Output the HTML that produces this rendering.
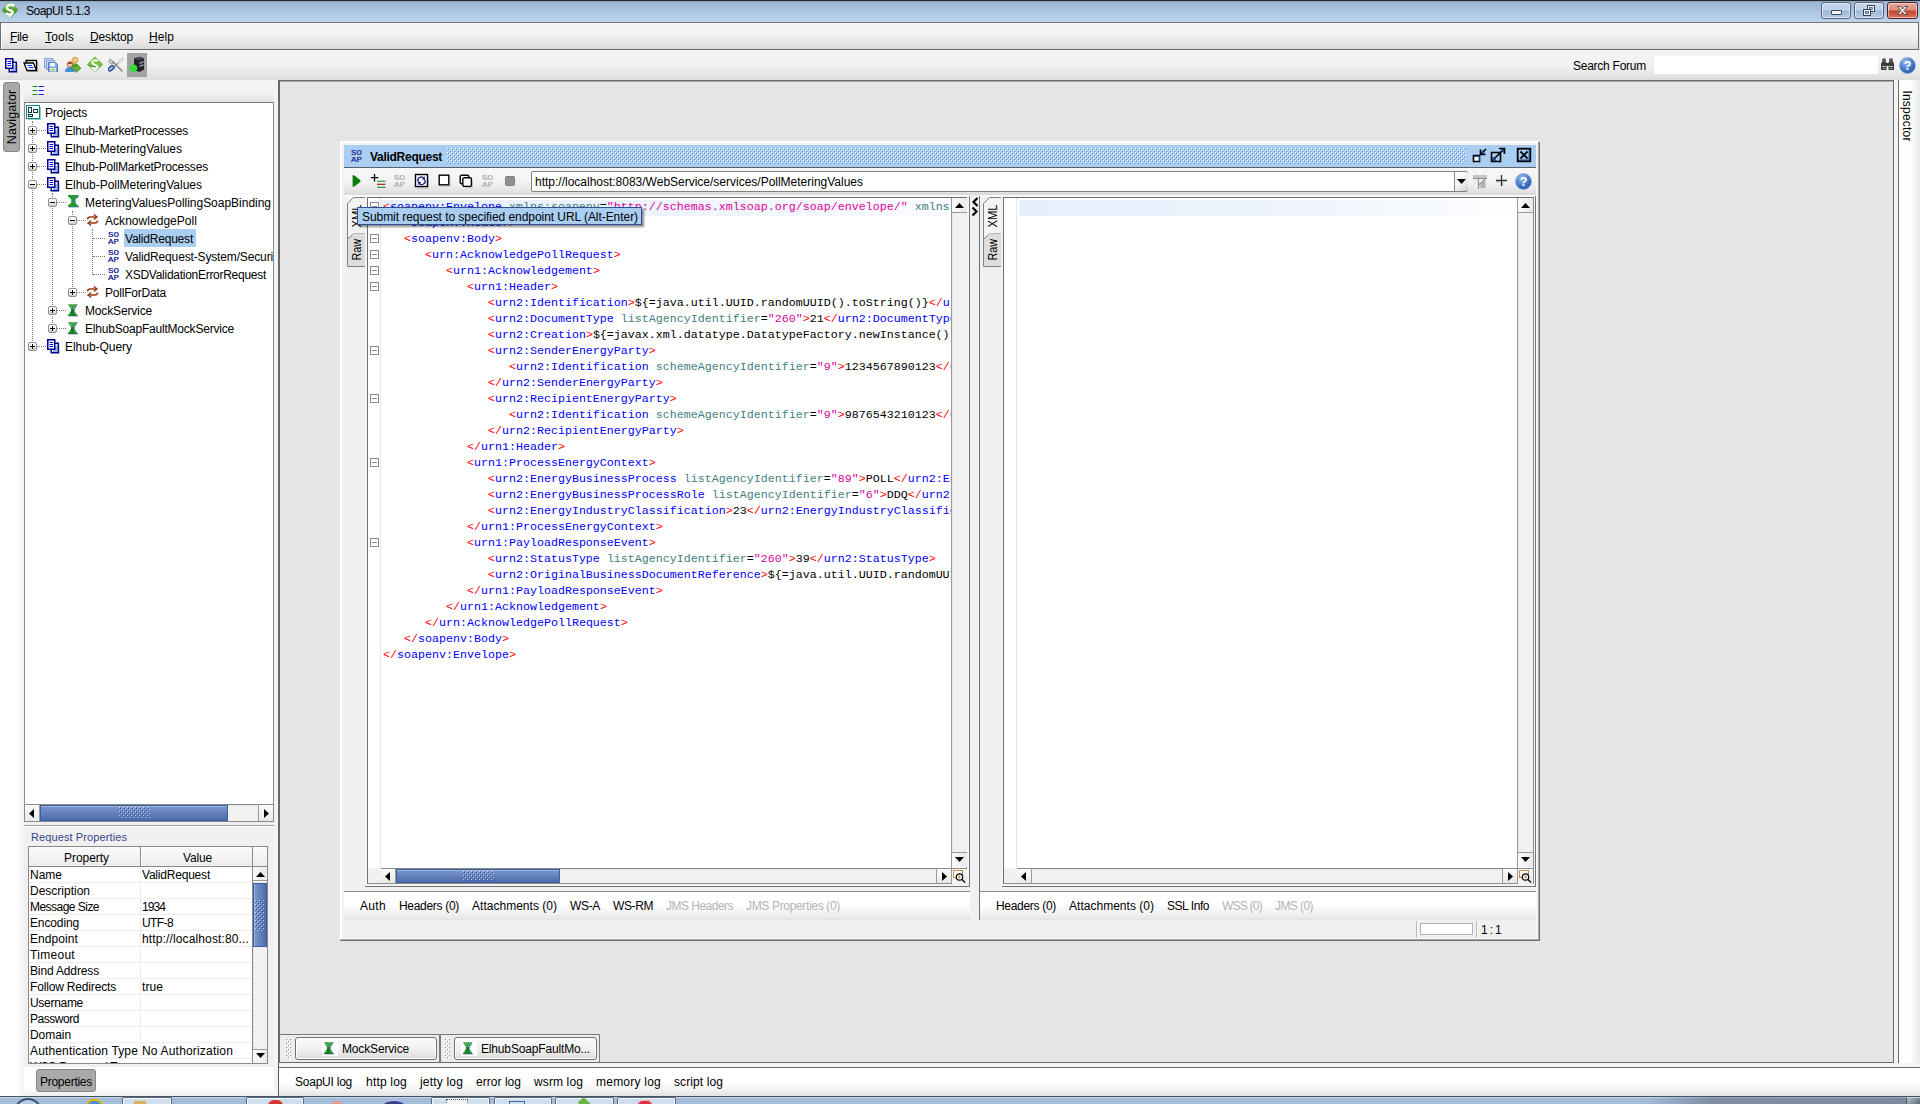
<!DOCTYPE html>
<html><head><meta charset="utf-8"><title>SoapUI 5.1.3</title><style>
html,body{margin:0;padding:0}
body{width:1920px;height:1104px;position:relative;overflow:hidden;background:#f0f0f0;font:12px/14px "Liberation Sans",sans-serif;color:#000}
body div,body svg,.t{position:absolute}
.t{white-space:pre;line-height:14px}
.code{font:11.667px/16px "Liberation Mono",monospace;white-space:pre}
.code .ln{left:0;height:16px;white-space:pre}
i{display:block}
</style></head><body>
<svg width="0" height="0" style="left:0;top:0"><defs><pattern id="gripb" width="4" height="4" patternUnits="userSpaceOnUse"><rect x="0" y="0" width="1" height="1" fill="#c3d0ec"/><rect x="2" y="2" width="1" height="1" fill="#c3d0ec"/><rect x="1" y="1" width="1" height="1" fill="#3d5c9e"/><rect x="3" y="3" width="1" height="1" fill="#3d5c9e"/></pattern><pattern id="gripg" width="4" height="4" patternUnits="userSpaceOnUse"><rect x="0" y="0" width="1" height="1" fill="#fff"/><rect x="2" y="2" width="1" height="1" fill="#fff"/><rect x="1" y="1" width="1" height="1" fill="#8c8c8c"/><rect x="3" y="3" width="1" height="1" fill="#8c8c8c"/></pattern></defs></svg>
<div style="left:0px;top:0px;width:1920px;height:22px;background:linear-gradient(#99b4d1 0,#a3bddb 30%,#b4cce6 70%,#bdd3ea 100%);"></div>
<div style="left:0px;top:0px;width:1920px;height:1px;background:#23282e"></div>
<div style="left:0px;top:1px;width:1920px;height:1px;background:#8fa6c0"></div>
<svg style="left:1px;top:1px;" width="18" height="18" viewBox="0 0 18 18"><defs><linearGradient id="dg" x1="0" y1="0" x2="0" y2="1"><stop offset="0" stop-color="#8fcf5a"/><stop offset=".55" stop-color="#4f9a28"/><stop offset="1" stop-color="#3d8a1e"/></linearGradient></defs><path d="M9 1Q9.800 1 10.500 1.700L16.500 8Q17.200 9 16.500 10L10.500 16.300Q9 17.600 7.500 16.300L1.500 10Q0.800 9 1.500 8L7.500 1.700Q8.200 1 9 1z" fill="url(#dg)"/><path d="M9 12.500l4.500-2.500-3.500 6.300Q9 17.300 8 16.300L5 13z" fill="#f4f8f0"/><path d="M12.500 4.500C10 3 5.800 4 5.800 6.800c0 3 6 2 6 4.600 0 2-3.500 2.700-6.300 1.200" fill="none" stroke="#fff" stroke-width="2.300" stroke-linecap="round"/></svg>
<span class="t" style="left:26px;top:4px;letter-spacing:-0.504px;">SoapUI 5.1.3</span>
<div style="left:1821px;top:2px;width:28px;height:15px;background:linear-gradient(#c3d6ec 0,#bdd1e8 48%,#9db8d6 52%,#b3cbe5 100%);border:1px solid #56657d;border-radius:3px;box-shadow:inset 0 0 0 1px rgba(255,255,255,.55);"></div>
<div style="left:1854px;top:2px;width:28px;height:15px;background:linear-gradient(#c3d6ec 0,#bdd1e8 48%,#9db8d6 52%,#b3cbe5 100%);border:1px solid #56657d;border-radius:3px;box-shadow:inset 0 0 0 1px rgba(255,255,255,.55);"></div>
<div style="left:1887px;top:2px;width:29px;height:15px;background:linear-gradient(#e8a99b 0,#dc8b7a 48%,#c6442a 52%,#d9735a 100%);border:1px solid #5a1a22;border-radius:3px;box-shadow:inset 0 0 0 1px rgba(255,255,255,.55);"></div>
<div style="left:1831px;top:10px;width:9px;height:3px;background:#f4f4f4;border:1px solid #3b4458;border-radius:1px;"></div>
<svg style="left:1862px;top:4px;" width="14" height="13" viewBox="0 0 14 13"><rect x="5.5" y="1.5" width="7" height="6" fill="#f4f4f4" stroke="#3b4458"/><rect x="7.5" y="3.5" width="3" height="2" fill="#9db8d6" stroke="#3b4458" stroke-width=".6"/><rect x="1.5" y="5.5" width="7" height="6" fill="#f4f4f4" stroke="#3b4458"/><rect x="3.5" y="7.5" width="3" height="2" fill="#9db8d6" stroke="#3b4458" stroke-width=".6"/></svg>
<svg style="left:1896px;top:5px;" width="13" height="11" viewBox="0 0 13 11"><path d="M1.5 1.5h3l2 2.6 2-2.6h3L8 5.5l3.5 4h-3l-2-2.6-2 2.6h-3L5 5.5z" fill="#f6f6f6" stroke="#4a4a55" stroke-width=".9"/></svg>
<div style="left:0px;top:22px;width:1919px;height:28px;box-sizing:border-box;border:1px solid #6c6c6c;border-top-color:#767676;background:linear-gradient(#f6f6f6 0,#f2f2f2 45%,#e6e6e6 75%,#dadada 100%);"></div>
<div style="left:1px;top:23px;width:1px;height:26px;background:#fff"></div>
<div style="left:1919px;top:22px;width:1px;height:28px;background:#dfe6ee"></div>
<span class="t" style="left:10px;top:30px;letter-spacing:-0.334px;"><u>F</u>ile</span>
<span class="t" style="left:45px;top:30px;letter-spacing:0.198px;"><u>T</u>ools</span>
<span class="t" style="left:90px;top:30px;letter-spacing:-0.146px;"><u>D</u>esktop</span>
<span class="t" style="left:149px;top:30px;letter-spacing:0.080px;"><u>H</u>elp</span>
<div style="left:0px;top:50px;width:1920px;height:30px;background:linear-gradient(#f4f4f4 0,#f1f1f1 50%,#e4e4e4 85%,#dcdcdc 100%);"></div>
<svg style="left:5px;top:58px;" width="13" height="15" viewBox="0 0 13 15"><rect x="4.250" y="4.250" width="7" height="9.500" fill="#fff" stroke="#00008b" stroke-width="1.500"/><path d="M8.200 8h2M8.200 10h2M6 12h4.200" stroke="#2a6cff" stroke-width="1"/><path d="M12.300 6v9H6" stroke="#8a8a8a" stroke-width="0.800" fill="none" opacity=".6"/><rect x="0.750" y="0.750" width="7" height="9.500" fill="#fff" stroke="#00008b" stroke-width="1.500"/><path d="M2.500 3.500h3.600M2.500 5.500h3.600M2.500 7.500h3.600" stroke="#0000ff" stroke-width="1"/></svg>
<svg style="left:23px;top:58px;" width="16" height="14" viewBox="0 0 16 14"><path d="M3 2.500H13.500V12.500H5z" fill="#fff" stroke="#000" stroke-width="1.300"/><path d="M1 5H10.500L13.500 12.500H4z" fill="#fff" stroke="#000" stroke-width="1.300"/><path d="M14.700 4v9.700H6" stroke="#888" stroke-width="1" fill="none" opacity=".7"/><path d="M4.500 7.500h4.500M5.500 9.500h5" stroke="#1a3cff" stroke-width="1.100"/></svg>
<svg style="left:43px;top:57px;" width="16" height="16" viewBox="0 0 16 16"><rect x="1.5" y="1.5" width="8" height="9" fill="#c9dcf4" stroke="#7fa1d6"/><rect x="3.5" y="3.5" width="8" height="9" fill="#c9dcf4" stroke="#7fa1d6"/><path d="M5.5 5.5h7l2 2v7h-9z" fill="#7ea6e0" stroke="#4f7fc8"/><rect x="7" y="6" width="5" height="3.4" fill="#fff"/><rect x="7" y="11" width="6" height="3.5" fill="#e8f0d8"/><rect x="8" y="12" width="4" height="1.3" fill="#8cc63f"/></svg>
<svg style="left:64px;top:56px;" width="18" height="17" viewBox="0 0 18 17"><circle cx="11" cy="4.2" r="3" fill="#f4c27a" stroke="#d8962c" stroke-width=".8"/><path d="M6.5 13c0-4 2-5.5 4.5-5.5s4.5 1.500 4.500 5.500z" fill="#5aa83a"/><circle cx="6" cy="8.600" r="2.800" fill="#f0c8a0" stroke="#a0522d" stroke-width=".8"/><path d="M5.8 5.8a2.800 2.800 0 0 1 3 2.200l-5.600 0a2.800 2.800 0 0 1 2.600-2.200z" fill="#a0522d"/><path d="M1 16c0-3.500 2-5 5-5s5 1.500 5 5z" fill="#4a90e2"/><path d="M8 10.500h4V8l5 4.200-5 4.200v-2.500H8z" fill="#6ab43e" stroke="#3d8a1e" stroke-width=".8"/></svg>
<svg style="left:86px;top:56px;" width="18" height="17" viewBox="0 0 18 17"><path d="M9 0.800L17 8.500 9 16.200 1 8.500z" fill="#5aa02c"/><path d="M9 0.800L17 8.500 9 10 1 8.500z" fill="#7cc242"/><path d="M9 12l5-2.500L9 16.200 4 10.500z" fill="#eef4ea"/><path d="M12 4.800C9.800 3.600 6.300 4.400 6.300 6.700c0 2.500 5.200 1.800 5.200 4 0 1.800-3.200 2.300-5.400 1.100" fill="none" stroke="#fff" stroke-width="1.900"/></svg>
<svg style="left:108px;top:57px;" width="17" height="16" viewBox="0 0 17 16"><path d="M10 6L14.500 1.500" stroke="#bbb" stroke-width="2.200" stroke-linecap="round"/><path d="M10 6L14.500 1.500" stroke="#fff" stroke-width="1" stroke-linecap="round"/><path d="M8 8l6 6" stroke="#8a8a8a" stroke-width="1.600" stroke-linecap="round"/><path d="M9.500 6.500L4 12" stroke="#8a8a8a" stroke-width="1.500"/><path d="M2.500 2a2.600 2.600 0 1 0 3.600 3.200L4.500 4.800 3.200 3.200z" fill="#ddd" stroke="#8a8a8a" stroke-width=".9"/><path d="M8 8L4 4" stroke="#8a8a8a" stroke-width="1.600"/><rect x="0" y="9.300" width="6.500" height="3.600" rx="1.800" transform="rotate(-40 3.500 11.500)" fill="#9cb4dc" stroke="#1c3f94" stroke-width="1.200"/></svg>
<div style="left:127px;top:53px;width:20px;height:24px;background:#a3a3a3"></div>
<svg style="left:129px;top:56px;" width="16" height="17" viewBox="0 0 16 17"><path d="M5 2.200L11 0.800l4 1.600v11L10.500 16 5 14z" fill="#23232b"/><path d="M5 2.200L11 0.800l4 1.600L10 4z" fill="#4a4a5c"/><path d="M10.500 6.500l4-1.400v1.600l-4 1.400zM10.500 9.500l4-1.400v1.600l-4 1.400z" fill="#9a9ab0"/><circle cx="4.500" cy="12.200" r="3.700" fill="#2fe02f"/></svg>
<span class="t" style="left:1573px;top:59px;letter-spacing:-0.252px;">Search Forum</span>
<div style="left:1654px;top:56px;width:224px;height:18px;background:#fff"></div>
<svg style="left:1880px;top:57px;" width="15" height="15" viewBox="0 0 15 15"><path d="M1 7.500c0-2 1-3 2.500-3h1.500c1 0 1.500.8 1.500 1.500h2c0-.7.500-1.500 1.500-1.500H11.500c1.500 0 2.500 1 2.500 3V13H8.500V9h-2v4H1z" fill="#3d3d3d"/><rect x="2.200" y="1.500" width="3.600" height="3.500" fill="#555"/><rect x="9.200" y="1.500" width="3.600" height="3.500" fill="#555"/><path d="M2 9.500h4M9 9.500h4" stroke="#b9b9b9" stroke-width="1.200"/><path d="M2.500 11.500h3M9.500 11.500h3" stroke="#888" stroke-width="1"/></svg>
<svg style="left:1899px;top:57px;" width="17" height="17" viewBox="0 0 17 17"><defs><radialGradient id="hg1899" cx=".4" cy=".3" r=".8"><stop offset="0" stop-color="#9fc0ee"/><stop offset=".6" stop-color="#3f73c4"/><stop offset="1" stop-color="#1f4ea0"/></radialGradient></defs><circle cx="8.500" cy="8.500" r="8" fill="url(#hg1899)" stroke="#8fb0e0" stroke-width=".8"/><text x="8.600" y="13" text-anchor="middle" font-family="Liberation Sans,sans-serif" font-weight="bold" font-size="12.500" fill="#fff">?</text></svg>
<div style="left:0px;top:80px;width:25px;height:1016px;background:linear-gradient(90deg,#fff 0,#fff 60%,#f0f0f0 100%);"></div>
<div style="left:3px;top:82px;width:15px;height:68px;background:#a9a9a9;border:1px solid #868686;border-radius:3px;"></div>
<span class="t" style="left:3px;top:82px;width:18px;height:69px;"><span style="position:absolute;left:9px;top:34.5px;transform:translate(-50%,-50%) rotate(-90deg);letter-spacing:0.1px;white-space:nowrap;font-size:12.5px">Navigator</span></span>
<div style="left:24px;top:80px;width:251px;height:22px;background:linear-gradient(#f6f6f6 0,#f2f2f2 55%,#e2e2e2 100%);"></div>
<svg style="left:32px;top:85px;" width="13" height="11" viewBox="0 0 13 11"><path d="M0.5 1.500h5M0.5 5.500h5M0.5 9.500h5" stroke="#0a8a0a" stroke-width="1.200"/><path d="M6.800 1.500h5M6.800 5.500h5M6.800 9.500h5" stroke="#1414ff" stroke-width="1.200"/></svg>
<div style="left:24px;top:102px;width:250px;height:720px;box-sizing:border-box;background:#fff;border:1px solid #8a8a8a;border-top-color:#7a7a7a;"></div>
<div style="left:32px;top:121px;width:0px;height:226px;border-left:1px dotted #7c7c7c;"></div>
<div style="left:52px;top:193px;width:0px;height:136px;border-left:1px dotted #7c7c7c;"></div>
<div style="left:72px;top:211px;width:0px;height:82px;border-left:1px dotted #7c7c7c;"></div>
<div style="left:92px;top:229px;width:0px;height:46px;border-left:1px dotted #7c7c7c;"></div>
<div style="left:25px;top:103px;width:248px;height:702px;overflow:hidden">
<svg style="left:1px;top:2px;shape-rendering:crispEdges;" width="15" height="15" viewBox="0 0 15 15"><rect x="0.500" y="0.500" width="13" height="13" fill="#fff" stroke="#0a8a8a" stroke-width="1"/><path d="M14.500 1.500v13h-13" fill="none" stroke="#9ccaca" stroke-width="1"/><rect x="2.500" y="2.500" width="3" height="5" fill="#fff" stroke="#0c3838" stroke-width="1"/><rect x="7.500" y="4.500" width="4" height="3" fill="#fff" stroke="#0c3838" stroke-width="1"/><rect x="2.500" y="9.500" width="4" height="2" fill="#fff" stroke="#0c3838" stroke-width="1"/></svg>
<span class="t" style="left:20px;top:3px;letter-spacing:-0.169px;">Projects</span>
<div style="left:12px;top:27px;width:9px;height:0px;border-top:1px dotted #7c7c7c;"></div>
<div style="left:3px;top:23px;width:7px;height:7px;border:1px solid #8f8f8f;border-radius:2px;background:linear-gradient(#fff 0,#f4f2ee 50%,#cfc8ba 100%);"><i style="position:absolute;left:1px;top:3px;width:5px;height:1px;background:#000"></i><i style="position:absolute;left:3px;top:1px;width:1px;height:5px;background:#000"></i></div>
<svg style="left:22px;top:20px;" width="13" height="15" viewBox="0 0 13 15"><rect x="4.250" y="4.250" width="7" height="9.500" fill="#fff" stroke="#00008b" stroke-width="1.500"/><path d="M8.200 8h2M8.200 10h2M6 12h4.200" stroke="#2a6cff" stroke-width="1"/><path d="M12.300 6v9H6" stroke="#8a8a8a" stroke-width="0.800" fill="none" opacity=".6"/><rect x="0.750" y="0.750" width="7" height="9.500" fill="#fff" stroke="#00008b" stroke-width="1.500"/><path d="M2.500 3.500h3.600M2.500 5.500h3.600M2.500 7.500h3.600" stroke="#0000ff" stroke-width="1"/></svg>
<span class="t" style="left:40px;top:21px;letter-spacing:-0.209px;">Elhub-MarketProcesses</span>
<div style="left:12px;top:45px;width:9px;height:0px;border-top:1px dotted #7c7c7c;"></div>
<div style="left:3px;top:41px;width:7px;height:7px;border:1px solid #8f8f8f;border-radius:2px;background:linear-gradient(#fff 0,#f4f2ee 50%,#cfc8ba 100%);"><i style="position:absolute;left:1px;top:3px;width:5px;height:1px;background:#000"></i><i style="position:absolute;left:3px;top:1px;width:1px;height:5px;background:#000"></i></div>
<svg style="left:22px;top:38px;" width="13" height="15" viewBox="0 0 13 15"><rect x="4.250" y="4.250" width="7" height="9.500" fill="#fff" stroke="#00008b" stroke-width="1.500"/><path d="M8.200 8h2M8.200 10h2M6 12h4.200" stroke="#2a6cff" stroke-width="1"/><path d="M12.300 6v9H6" stroke="#8a8a8a" stroke-width="0.800" fill="none" opacity=".6"/><rect x="0.750" y="0.750" width="7" height="9.500" fill="#fff" stroke="#00008b" stroke-width="1.500"/><path d="M2.500 3.500h3.600M2.500 5.500h3.600M2.500 7.500h3.600" stroke="#0000ff" stroke-width="1"/></svg>
<span class="t" style="left:40px;top:39px;letter-spacing:-0.009px;">Elhub-MeteringValues</span>
<div style="left:12px;top:63px;width:9px;height:0px;border-top:1px dotted #7c7c7c;"></div>
<div style="left:3px;top:59px;width:7px;height:7px;border:1px solid #8f8f8f;border-radius:2px;background:linear-gradient(#fff 0,#f4f2ee 50%,#cfc8ba 100%);"><i style="position:absolute;left:1px;top:3px;width:5px;height:1px;background:#000"></i><i style="position:absolute;left:3px;top:1px;width:1px;height:5px;background:#000"></i></div>
<svg style="left:22px;top:56px;" width="13" height="15" viewBox="0 0 13 15"><rect x="4.250" y="4.250" width="7" height="9.500" fill="#fff" stroke="#00008b" stroke-width="1.500"/><path d="M8.200 8h2M8.200 10h2M6 12h4.200" stroke="#2a6cff" stroke-width="1"/><path d="M12.300 6v9H6" stroke="#8a8a8a" stroke-width="0.800" fill="none" opacity=".6"/><rect x="0.750" y="0.750" width="7" height="9.500" fill="#fff" stroke="#00008b" stroke-width="1.500"/><path d="M2.500 3.500h3.600M2.500 5.500h3.600M2.500 7.500h3.600" stroke="#0000ff" stroke-width="1"/></svg>
<span class="t" style="left:40px;top:57px;letter-spacing:-0.176px;">Elhub-PollMarketProcesses</span>
<div style="left:12px;top:81px;width:9px;height:0px;border-top:1px dotted #7c7c7c;"></div>
<div style="left:3px;top:77px;width:7px;height:7px;border:1px solid #8f8f8f;border-radius:2px;background:linear-gradient(#fff 0,#f4f2ee 50%,#cfc8ba 100%);"><i style="position:absolute;left:1px;top:3px;width:5px;height:1px;background:#000"></i></div>
<svg style="left:22px;top:74px;" width="13" height="15" viewBox="0 0 13 15"><rect x="4.250" y="4.250" width="7" height="9.500" fill="#fff" stroke="#00008b" stroke-width="1.500"/><path d="M8.200 8h2M8.200 10h2M6 12h4.200" stroke="#2a6cff" stroke-width="1"/><path d="M12.300 6v9H6" stroke="#8a8a8a" stroke-width="0.800" fill="none" opacity=".6"/><rect x="0.750" y="0.750" width="7" height="9.500" fill="#fff" stroke="#00008b" stroke-width="1.500"/><path d="M2.500 3.500h3.600M2.500 5.500h3.600M2.500 7.500h3.600" stroke="#0000ff" stroke-width="1"/></svg>
<span class="t" style="left:40px;top:75px;letter-spacing:-0.008px;">Elhub-PollMeteringValues</span>
<div style="left:32px;top:99px;width:9px;height:0px;border-top:1px dotted #7c7c7c;"></div>
<div style="left:23px;top:95px;width:7px;height:7px;border:1px solid #8f8f8f;border-radius:2px;background:linear-gradient(#fff 0,#f4f2ee 50%,#cfc8ba 100%);"><i style="position:absolute;left:1px;top:3px;width:5px;height:1px;background:#000"></i></div>
<svg style="left:42px;top:92px;" width="13" height="13" viewBox="0 0 13 13"><path d="M1 0h10v1.500L7.800 4v4L11 10.500V12H1V10.500L4.200 8V4L1 1.500z" fill="#8c8cf0" transform="translate(1 .6)"/><path d="M1 0h10v1.500L7.800 4v4L11 10.500V12H1V10.500L4.200 8V4L1 1.500z" fill="#1f9a2f"/></svg>
<span class="t" style="left:60px;top:93px;letter-spacing:-0.018px;">MeteringValuesPollingSoapBinding</span>
<div style="left:52px;top:117px;width:9px;height:0px;border-top:1px dotted #7c7c7c;"></div>
<div style="left:43px;top:113px;width:7px;height:7px;border:1px solid #8f8f8f;border-radius:2px;background:linear-gradient(#fff 0,#f4f2ee 50%,#cfc8ba 100%);"><i style="position:absolute;left:1px;top:3px;width:5px;height:1px;background:#000"></i></div>
<svg style="left:61px;top:111px;" width="13" height="13" viewBox="0 0 13 13"><path d="M1.500 5.500C1.500 3.800 2.800 3 4.500 3H10" fill="none" stroke="#9a3a14" stroke-width="1.450"/><path d="M7.800 0.500L11 3 7.800 5.500" fill="none" stroke="#9a3a14" stroke-width="1.450"/><path d="M11.500 6.500C11.500 8.200 10.200 9 8.500 9H3" fill="none" stroke="#9a3a14" stroke-width="1.450"/><path d="M5.200 6.500L2 9l3.200 2.500" fill="none" stroke="#9a3a14" stroke-width="1.450"/></svg>
<span class="t" style="left:80px;top:111px;letter-spacing:0.041px;">AcknowledgePoll</span>
<div style="left:68px;top:135px;width:12px;height:0px;border-top:1px dotted #7c7c7c;"></div>
<svg style="left:83px;top:128px;" width="12" height="14" viewBox="0 0 12 14"><text x="0" y="6.200" font-family="Liberation Mono,monospace" font-size="7.800" fill="#00008b" stroke="#00008b" stroke-width=".15" textLength="11" lengthAdjust="spacingAndGlyphs">SO</text><text x="0" y="13.100" font-family="Liberation Mono,monospace" font-size="7.800" fill="#00008b" stroke="#00008b" stroke-width=".15" textLength="11" lengthAdjust="spacingAndGlyphs">AP</text></svg>
<div style="left:99px;top:126px;width:72px;height:18px;background:#a9cef2;"></div>
<span class="t" style="left:100px;top:129px;letter-spacing:-0.207px;">ValidRequest</span>
<div style="left:68px;top:153px;width:12px;height:0px;border-top:1px dotted #7c7c7c;"></div>
<svg style="left:83px;top:146px;" width="12" height="14" viewBox="0 0 12 14"><text x="0" y="6.200" font-family="Liberation Mono,monospace" font-size="7.800" fill="#00008b" stroke="#00008b" stroke-width=".15" textLength="11" lengthAdjust="spacingAndGlyphs">SO</text><text x="0" y="13.100" font-family="Liberation Mono,monospace" font-size="7.800" fill="#00008b" stroke="#00008b" stroke-width=".15" textLength="11" lengthAdjust="spacingAndGlyphs">AP</text></svg>
<span class="t" style="left:100px;top:147px;letter-spacing:-0.148px;">ValidRequest-System/Securi</span>
<div style="left:68px;top:171px;width:12px;height:0px;border-top:1px dotted #7c7c7c;"></div>
<svg style="left:83px;top:164px;" width="12" height="14" viewBox="0 0 12 14"><text x="0" y="6.200" font-family="Liberation Mono,monospace" font-size="7.800" fill="#00008b" stroke="#00008b" stroke-width=".15" textLength="11" lengthAdjust="spacingAndGlyphs">SO</text><text x="0" y="13.100" font-family="Liberation Mono,monospace" font-size="7.800" fill="#00008b" stroke="#00008b" stroke-width=".15" textLength="11" lengthAdjust="spacingAndGlyphs">AP</text></svg>
<span class="t" style="left:100px;top:165px;letter-spacing:-0.274px;">XSDValidationErrorRequest</span>
<div style="left:52px;top:189px;width:9px;height:0px;border-top:1px dotted #7c7c7c;"></div>
<div style="left:43px;top:185px;width:7px;height:7px;border:1px solid #8f8f8f;border-radius:2px;background:linear-gradient(#fff 0,#f4f2ee 50%,#cfc8ba 100%);"><i style="position:absolute;left:1px;top:3px;width:5px;height:1px;background:#000"></i><i style="position:absolute;left:3px;top:1px;width:1px;height:5px;background:#000"></i></div>
<svg style="left:61px;top:183px;" width="13" height="13" viewBox="0 0 13 13"><path d="M1.500 5.500C1.500 3.800 2.800 3 4.500 3H10" fill="none" stroke="#9a3a14" stroke-width="1.450"/><path d="M7.800 0.500L11 3 7.800 5.500" fill="none" stroke="#9a3a14" stroke-width="1.450"/><path d="M11.500 6.500C11.500 8.200 10.200 9 8.500 9H3" fill="none" stroke="#9a3a14" stroke-width="1.450"/><path d="M5.200 6.500L2 9l3.200 2.500" fill="none" stroke="#9a3a14" stroke-width="1.450"/></svg>
<span class="t" style="left:80px;top:183px;letter-spacing:-0.214px;">PollForData</span>
<div style="left:32px;top:207px;width:9px;height:0px;border-top:1px dotted #7c7c7c;"></div>
<div style="left:23px;top:203px;width:7px;height:7px;border:1px solid #8f8f8f;border-radius:2px;background:linear-gradient(#fff 0,#f4f2ee 50%,#cfc8ba 100%);"><i style="position:absolute;left:1px;top:3px;width:5px;height:1px;background:#000"></i><i style="position:absolute;left:3px;top:1px;width:1px;height:5px;background:#000"></i></div>
<svg style="left:42px;top:201px;" width="12" height="13" viewBox="0 0 12 13"><path d="M1 0h9L7 5v2l3.500 5H0.500L4 7V5z" fill="#8c8cf0" transform="translate(.9 .6)"/><path d="M1 0h9L7 5.200H4z" fill="#6cc06c"/><path d="M1.500 0.500l3 4M4 0.500l2 3.500M7 .5L5 4.500M9.500 .5l-3 4" stroke="#0f7a1f" stroke-width=".7"/><path d="M4 5h3v2l3.500 5H0.500L4 7z" fill="#14801f"/><path d="M2 11l2-2M9 11L7 9" stroke="#6cc06c" stroke-width=".7"/></svg>
<span class="t" style="left:60px;top:201px;letter-spacing:-0.153px;">MockService</span>
<div style="left:32px;top:225px;width:9px;height:0px;border-top:1px dotted #7c7c7c;"></div>
<div style="left:23px;top:221px;width:7px;height:7px;border:1px solid #8f8f8f;border-radius:2px;background:linear-gradient(#fff 0,#f4f2ee 50%,#cfc8ba 100%);"><i style="position:absolute;left:1px;top:3px;width:5px;height:1px;background:#000"></i><i style="position:absolute;left:3px;top:1px;width:1px;height:5px;background:#000"></i></div>
<svg style="left:42px;top:219px;" width="12" height="13" viewBox="0 0 12 13"><path d="M1 0h9L7 5v2l3.500 5H0.500L4 7V5z" fill="#8c8cf0" transform="translate(.9 .6)"/><path d="M1 0h9L7 5.200H4z" fill="#6cc06c"/><path d="M1.500 0.500l3 4M4 0.500l2 3.500M7 .5L5 4.500M9.500 .5l-3 4" stroke="#0f7a1f" stroke-width=".7"/><path d="M4 5h3v2l3.500 5H0.500L4 7z" fill="#14801f"/><path d="M2 11l2-2M9 11L7 9" stroke="#6cc06c" stroke-width=".7"/></svg>
<span class="t" style="left:60px;top:219px;letter-spacing:-0.203px;">ElhubSoapFaultMockService</span>
<div style="left:12px;top:243px;width:9px;height:0px;border-top:1px dotted #7c7c7c;"></div>
<div style="left:3px;top:239px;width:7px;height:7px;border:1px solid #8f8f8f;border-radius:2px;background:linear-gradient(#fff 0,#f4f2ee 50%,#cfc8ba 100%);"><i style="position:absolute;left:1px;top:3px;width:5px;height:1px;background:#000"></i><i style="position:absolute;left:3px;top:1px;width:1px;height:5px;background:#000"></i></div>
<svg style="left:22px;top:236px;" width="13" height="15" viewBox="0 0 13 15"><rect x="4.250" y="4.250" width="7" height="9.500" fill="#fff" stroke="#00008b" stroke-width="1.500"/><path d="M8.200 8h2M8.200 10h2M6 12h4.200" stroke="#2a6cff" stroke-width="1"/><path d="M12.300 6v9H6" stroke="#8a8a8a" stroke-width="0.800" fill="none" opacity=".6"/><rect x="0.750" y="0.750" width="7" height="9.500" fill="#fff" stroke="#00008b" stroke-width="1.500"/><path d="M2.500 3.500h3.600M2.500 5.500h3.600M2.500 7.500h3.600" stroke="#0000ff" stroke-width="1"/></svg>
<span class="t" style="left:40px;top:237px;letter-spacing:-0.033px;">Elhub-Query</span>
</div>
<div style="left:25px;top:804px;width:248px;height:1px;background:#8a8a8a"></div>
<div style="left:25px;top:805px;width:248px;height:16px;background:#f1f1f1;box-shadow:inset 0 1px 0 #e4e4e4;"></div>
<div style="left:25px;top:805px;width:15px;height:16px;box-sizing:border-box;background:linear-gradient(#fbfbfb,#e9e9e9);border-right:1px solid #9a9a9a;"></div>
<svg style="left:29px;top:809px;" width="5" height="9" viewBox="0 0 5 9"><path d="M5 0L0 4.500 5 9z" fill="#000"/></svg>
<div style="left:258px;top:805px;width:15px;height:16px;box-sizing:border-box;background:linear-gradient(#fbfbfb,#e9e9e9);border-left:1px solid #9a9a9a;"></div>
<svg style="left:264px;top:809px;" width="5" height="9" viewBox="0 0 5 9"><path d="M0 0l5 4.500L0 9z" fill="#000"/></svg>
<div style="left:40px;top:805px;width:188px;height:16px;box-sizing:border-box;border:1px solid #3b5ea3;background:linear-gradient(#7d98cc 0,#6583bd 45%,#4d6dab 100%);box-shadow:inset 0 1px 0 #9fb4dc;"></div>
<svg style="left:119px;top:807px" width="31" height="12" shape-rendering="crispEdges"><rect width="31" height="12" fill="url(#gripb)"/></svg>
<div style="left:24px;top:825px;width:250px;height:1px;background:#9a9a9a"></div>
<div style="left:24px;top:826px;width:250px;height:1px;background:#fff"></div>
<span class="t" style="left:31px;top:829.77px;font-size:11px;color:#35448c;letter-spacing:0.102px;">Request Properties</span>
<div style="left:28px;top:846px;width:240px;height:218px;box-sizing:border-box;border:1px solid #8a8a8a;background:#fff;"></div>
<div style="left:29px;top:847px;width:238px;height:20px;background:linear-gradient(#fbfbfb,#ececec);border-bottom:1px solid #8a8a8a;box-sizing:border-box;"></div>
<div style="left:140px;top:847px;width:1px;height:19px;background:#8a8a8a"></div>
<div style="left:141px;top:847px;width:1px;height:19px;background:#fff"></div>
<div style="left:252px;top:847px;width:1px;height:19px;background:#8a8a8a"></div>
<span class="t" style="left:64px;top:851px;letter-spacing:-0.044px;">Property</span>
<span class="t" style="left:183px;top:851px;letter-spacing:-0.160px;">Value</span>
<div style="left:29px;top:867px;width:224px;height:196px;overflow:hidden">
<div style="left:0px;top:15px;width:224px;height:1px;background:#eeeeee"></div>
<span class="t" style="left:1px;top:1px;letter-spacing:-0.002px;">Name</span>
<span class="t" style="left:113px;top:1px;letter-spacing:-0.207px;">ValidRequest</span>
<div style="left:0px;top:31px;width:224px;height:1px;background:#eeeeee"></div>
<span class="t" style="left:1px;top:17px;letter-spacing:-0.002px;">Description</span>
<div style="left:0px;top:47px;width:224px;height:1px;background:#eeeeee"></div>
<span class="t" style="left:1px;top:33px;letter-spacing:-0.531px;">Message Size</span>
<span class="t" style="left:113px;top:33px;letter-spacing:-0.923px;">1934</span>
<div style="left:0px;top:63px;width:224px;height:1px;background:#eeeeee"></div>
<span class="t" style="left:1px;top:49px;letter-spacing:-0.130px;">Encoding</span>
<span class="t" style="left:113px;top:49px;letter-spacing:-0.599px;">UTF-8</span>
<div style="left:0px;top:79px;width:224px;height:1px;background:#eeeeee"></div>
<span class="t" style="left:1px;top:65px;letter-spacing:0.079px;">Endpoint</span>
<span class="t" style="left:113px;top:65px;letter-spacing:0.134px;">http://localhost:80...</span>
<div style="left:0px;top:95px;width:224px;height:1px;background:#eeeeee"></div>
<span class="t" style="left:1px;top:81px;letter-spacing:0.300px;">Timeout</span>
<div style="left:0px;top:111px;width:224px;height:1px;background:#eeeeee"></div>
<span class="t" style="left:1px;top:97px;letter-spacing:-0.143px;">Bind Address</span>
<div style="left:0px;top:127px;width:224px;height:1px;background:#eeeeee"></div>
<span class="t" style="left:1px;top:113px;letter-spacing:-0.168px;">Follow Redirects</span>
<span class="t" style="left:113px;top:113px;letter-spacing:0.080px;">true</span>
<div style="left:0px;top:143px;width:224px;height:1px;background:#eeeeee"></div>
<span class="t" style="left:1px;top:129px;letter-spacing:-0.294px;">Username</span>
<div style="left:0px;top:159px;width:224px;height:1px;background:#eeeeee"></div>
<span class="t" style="left:1px;top:145px;letter-spacing:-0.461px;">Password</span>
<div style="left:0px;top:175px;width:224px;height:1px;background:#eeeeee"></div>
<span class="t" style="left:1px;top:161px;letter-spacing:-0.058px;">Domain</span>
<div style="left:0px;top:191px;width:224px;height:1px;background:#eeeeee"></div>
<span class="t" style="left:1px;top:177px;letter-spacing:0.148px;">Authentication Type</span>
<span class="t" style="left:113px;top:177px;letter-spacing:0.184px;">No Authorization</span>
<div style="left:0px;top:207px;width:224px;height:1px;background:#eeeeee"></div>
<span class="t" style="left:1px;top:193px;letter-spacing:-0.538px;">WSS-Password Type</span>
<div style="left:111px;top:0px;width:1px;height:196px;background:#eeeeee"></div>
</div>
<div style="left:253px;top:867px;width:14px;height:196px;background:#f1f1f1;box-shadow:inset 1px 0 0 #e4e4e4;"></div>
<div style="left:253px;top:867px;width:14px;height:14px;box-sizing:border-box;background:linear-gradient(90deg,#fbfbfb,#e9e9e9);border-bottom:1px solid #9a9a9a;"></div>
<svg style="left:256px;top:872px;" width="9" height="5" viewBox="0 0 9 5"><path d="M0 5L4.500 0 9 5z" fill="#000"/></svg>
<div style="left:253px;top:1049px;width:14px;height:14px;box-sizing:border-box;background:linear-gradient(90deg,#fbfbfb,#e9e9e9);border-top:1px solid #9a9a9a;"></div>
<svg style="left:256px;top:1053px;" width="9" height="5" viewBox="0 0 9 5"><path d="M0 0l4.500 5L9 0z" fill="#000"/></svg>
<div style="left:253px;top:883px;width:14px;height:64px;box-sizing:border-box;border:1px solid #3b5ea3;background:linear-gradient(90deg,#7d98cc 0,#6583bd 45%,#4d6dab 100%);box-shadow:inset 1px 0 0 #9fb4dc;"></div>
<svg style="left:255px;top:900px" width="10" height="31" shape-rendering="crispEdges"><rect width="10" height="31" fill="url(#gripb)"/></svg>
<div style="left:252px;top:867px;width:1px;height:196px;background:#8a8a8a"></div>
<div style="left:24px;top:1067px;width:250px;height:29px;background:linear-gradient(#fff 0,#fff 70%,#f0f0f0 100%);"></div>
<div style="left:36px;top:1069px;width:58px;height:21px;background:#a9a9a9;border:1px solid #868686;border-radius:3px;"></div>
<span class="t" style="left:40px;top:1075px;letter-spacing:-0.269px;">Properties</span>
<div style="left:274px;top:80px;width:4px;height:1016px;background:#f3f3f3"></div>
<div style="left:278px;top:80px;width:1616px;height:983px;box-sizing:border-box;background:#e5e5e5;border:1px solid #6a6a6a;border-left:2px solid #686868;box-shadow:inset 0 1px 0 #a8a8a8;"></div>
<div style="left:1894px;top:80px;width:4px;height:983px;background:#f3f3f3"></div>
<div style="left:1898px;top:80px;width:1px;height:983px;background:#6a6a6a"></div>
<div style="left:1899px;top:80px;width:21px;height:983px;background:linear-gradient(90deg,#fff 0,#fff 50%,#eaeaea 100%);"></div>
<span class="t" style="left:1899px;top:84px;width:19px;height:60px;"><span style="position:absolute;left:8px;top:31.500px;transform:translate(-50%,-50%) rotate(90deg);letter-spacing:0.200px;white-space:nowrap;">Inspector</span></span>
<div style="left:278px;top:1063px;width:1642px;height:4px;background:#f3f3f3"></div>
<div style="left:278px;top:1067px;width:1642px;height:1px;background:#6a6a6a"></div>
<div style="left:278px;top:1068px;width:1642px;height:28px;background:linear-gradient(#fff 0,#fff 55%,#f0f0f0 80%,#e2e2e2 100%);"></div>
<div style="left:278px;top:1063px;width:1px;height:33px;background:#5c5c5c"></div>
<span class="t" style="left:295px;top:1075px;letter-spacing:-0.237px;">SoapUI log</span>
<span class="t" style="left:366px;top:1075px;letter-spacing:0.205px;">http log</span>
<span class="t" style="left:420px;top:1075px;letter-spacing:0.183px;">jetty log</span>
<span class="t" style="left:476px;top:1075px;letter-spacing:0.035px;">error log</span>
<span class="t" style="left:534px;top:1075px;letter-spacing:0.124px;">wsrm log</span>
<span class="t" style="left:596px;top:1075px;letter-spacing:0.232px;">memory log</span>
<span class="t" style="left:674px;top:1075px;letter-spacing:0.098px;">script log</span>
<div style="left:280px;top:1034px;width:320px;height:28px;box-sizing:border-box;background:#ececec;border-top:1px solid #7a7a7a;border-right:1px solid #7a7a7a;"></div>
<svg style="left:285px;top:1038px" width="6" height="21" shape-rendering="crispEdges"><rect width="6" height="21" fill="url(#gripg)"/></svg>
<div style="left:295px;top:1037px;width:142px;height:23px;box-sizing:border-box;border:1px solid #707070;border-radius:3px;background:linear-gradient(#fafafa,#f0f0f0 55%,#dcdcdc);box-shadow:inset 0 0 0 1px #fff;"></div>
<div style="left:322px;top:1040px;width:16px;height:16px;background:#fff"></div>
<svg style="left:323px;top:1042px;" width="12" height="13" viewBox="0 0 12 13"><path d="M1 0h9L7 5v2l3.500 5H0.500L4 7V5z" fill="#8c8cf0" transform="translate(.9 .6)"/><path d="M1 0h9L7 5.200H4z" fill="#6cc06c"/><path d="M1.500 0.500l3 4M4 0.500l2 3.500M7 .5L5 4.500M9.500 .5l-3 4" stroke="#0f7a1f" stroke-width=".7"/><path d="M4 5h3v2l3.500 5H0.500L4 7z" fill="#14801f"/><path d="M2 11l2-2M9 11L7 9" stroke="#6cc06c" stroke-width=".7"/></svg>
<span class="t" style="left:342px;top:1042px;letter-spacing:-0.153px;">MockService</span>
<div style="left:439px;top:1035px;width:2px;height:27px;background:#7a7a7a"></div>
<svg style="left:444px;top:1038px" width="6" height="21" shape-rendering="crispEdges"><rect width="6" height="21" fill="url(#gripg)"/></svg>
<div style="left:454px;top:1037px;width:143px;height:23px;box-sizing:border-box;border:1px solid #707070;border-radius:3px;background:linear-gradient(#fafafa,#f0f0f0 55%,#dcdcdc);box-shadow:inset 0 0 0 1px #fff;"></div>
<div style="left:461px;top:1040px;width:16px;height:16px;background:#fff"></div>
<svg style="left:462px;top:1042px;" width="12" height="13" viewBox="0 0 12 13"><path d="M1 0h9L7 5v2l3.500 5H0.500L4 7V5z" fill="#8c8cf0" transform="translate(.9 .6)"/><path d="M1 0h9L7 5.200H4z" fill="#6cc06c"/><path d="M1.500 0.500l3 4M4 0.500l2 3.500M7 .5L5 4.500M9.500 .5l-3 4" stroke="#0f7a1f" stroke-width=".7"/><path d="M4 5h3v2l3.500 5H0.500L4 7z" fill="#14801f"/><path d="M2 11l2-2M9 11L7 9" stroke="#6cc06c" stroke-width=".7"/></svg>
<span class="t" style="left:481px;top:1042px;letter-spacing:-0.161px;">ElhubSoapFaultMo...</span>
<div style="left:0px;top:1096px;width:1920px;height:8px;background:#a3bcd9"></div>
<div style="left:0px;top:1096px;width:1920px;height:1px;background:#46525f"></div>
<div style="left:0px;top:1097px;width:1920px;height:1px;background:#c3d8ee"></div>
<div style="left:1645px;top:1098px;width:261px;height:6px;background:linear-gradient(90deg,#a3bcd9,#7e8ea6 25%,#7a8aa2 100%)"></div>
<div style="left:1645px;top:1097px;width:261px;height:1px;background:linear-gradient(90deg,#c3d8ee,#9aa8bc 25%,#96a4b8 100%)"></div>
<div style="left:1906px;top:1097px;width:14px;height:7px;background:linear-gradient(135deg,#b4bcc8,#5f6c7c);border-left:1px solid #4a5563;border-top:1px solid #d0d6de;box-sizing:border-box;"></div>
<div style="left:122px;top:1097px;width:50px;height:8px;box-sizing:border-box;border:1px solid #5a6a80;border-bottom:none;border-radius:2px 2px 0 0;background:#cfdeef;box-shadow:inset 1px 1px 0 #f2f7fc,inset -1px 0 0 #f2f7fc;"></div>
<div style="left:246px;top:1097px;width:58px;height:8px;box-sizing:border-box;border:1px solid #5a6a80;border-bottom:none;border-radius:2px 2px 0 0;background:#cfdeef;box-shadow:inset 1px 1px 0 #f2f7fc,inset -1px 0 0 #f2f7fc;"></div>
<div style="left:431px;top:1097px;width:59px;height:8px;box-sizing:border-box;border:1px solid #5a6a80;border-bottom:none;border-radius:2px 2px 0 0;background:#cfdeef;box-shadow:inset 1px 1px 0 #f2f7fc,inset -1px 0 0 #f2f7fc;"></div>
<div style="left:494px;top:1097px;width:58px;height:8px;box-sizing:border-box;border:1px solid #5a6a80;border-bottom:none;border-radius:2px 2px 0 0;background:#cfdeef;box-shadow:inset 1px 1px 0 #f2f7fc,inset -1px 0 0 #f2f7fc;"></div>
<div style="left:555px;top:1097px;width:59px;height:8px;box-sizing:border-box;border:1px solid #5a6a80;border-bottom:none;border-radius:2px 2px 0 0;background:#cfdeef;box-shadow:inset 1px 1px 0 #f2f7fc,inset -1px 0 0 #f2f7fc;"></div>
<div style="left:617px;top:1097px;width:59px;height:8px;box-sizing:border-box;border:1px solid #5a6a80;border-bottom:none;border-radius:2px 2px 0 0;background:#cfdeef;box-shadow:inset 1px 1px 0 #f2f7fc,inset -1px 0 0 #f2f7fc;"></div>
<div style="left:14px;top:1098px;width:28px;height:28px;box-sizing:border-box;border:2px solid #3c5272;border-radius:14px;background:#b7cde6;"></div>
<div style="left:86px;top:1099px;width:17px;height:14px;box-sizing:border-box;border:2px solid #e8b800;border-radius:9px;background:#4a8fd8;"></div>
<div style="left:134px;top:1101px;width:12px;height:4px;background:#d9b25a"></div>
<div style="left:268px;top:1100px;width:15px;height:12px;background:#d8362e;border-radius:8px"></div>
<div style="left:331px;top:1101px;width:12px;height:10px;background:#e89a90;border-radius:6px"></div>
<div style="left:384px;top:1100px;width:20px;height:10px;background:#3a3f8c;border-radius:10px/5px;border-top:1px solid #c8c8e8"></div>
<div style="left:446px;top:1099px;width:22px;height:6px;background:#f4f4f4;border:1px dotted #555;box-sizing:border-box"></div>
<div style="left:509px;top:1101px;width:16px;height:4px;box-sizing:border-box;border:1px solid #3b6ea8;border-bottom:none"></div>
<div style="left:579px;top:1100px;width:12px;height:8px;background:#6ab43e;transform:rotate(45deg)"></div>
<div style="left:637px;top:1100px;width:16px;height:12px;background:#e03048;border-radius:8px;border:1px solid #f6b0b8;box-sizing:border-box"></div>
<div style="left:340px;top:141px;width:1198px;height:798px;background:#fff"></div>
<div style="left:342px;top:143px;width:1196px;height:796px;background:#f2f2f2"></div>
<div style="left:1538px;top:142px;width:1px;height:798px;background:#a6a6a6"></div>
<div style="left:1539px;top:142px;width:1px;height:799px;background:#707070"></div>
<div style="left:341px;top:939px;width:1198px;height:1px;background:#a6a6a6"></div>
<div style="left:340px;top:940px;width:1200px;height:1px;background:#707070"></div>
<div style="left:344px;top:145px;width:1192px;height:793px;background:#f0f0f0"></div>
<div style="left:1536px;top:168px;width:2px;height:770px;background:#f5f5f5"></div>
<div style="left:344px;top:938px;width:1194px;height:1px;background:#fafafa"></div>
<div style="left:344px;top:145px;width:1192px;height:22px;background:#a9cef2"></div>
<div style="left:344px;top:167px;width:1192px;height:1px;background:#5c626c"></div>
<svg style="left:447px;top:148px" width="1019" height="16" shape-rendering="crispEdges"><defs><pattern id="bump" width="4" height="4" patternUnits="userSpaceOnUse"><rect x="0" y="0" width="1" height="1" fill="#fff"/><rect x="1" y="1" width="1" height="1" fill="#5c8cc6"/><rect x="2" y="2" width="1" height="1" fill="#fff"/><rect x="3" y="3" width="1" height="1" fill="#5c8cc6"/></pattern></defs><rect width="1019" height="16" fill="url(#bump)"/></svg>
<svg style="left:351px;top:149px;" width="12" height="14" viewBox="0 0 12 14"><text x="0" y="6.200" font-family="Liberation Mono,monospace" font-size="7.800" fill="#16168a" stroke="#16168a" stroke-width=".15" textLength="11" lengthAdjust="spacingAndGlyphs">SO</text><text x="0" y="13.100" font-family="Liberation Mono,monospace" font-size="7.800" fill="#16168a" stroke="#16168a" stroke-width=".15" textLength="11" lengthAdjust="spacingAndGlyphs">AP</text></svg>
<span class="t" style="left:370px;top:150px;font-weight:bold;letter-spacing:-0.280px;">ValidRequest</span>
<svg style="left:1472px;top:147px;" width="16" height="16" viewBox="0 0 16 16"><path d="M1.500 8.500h6v6h-6z" fill="#fff" stroke="#000" stroke-width="1.600"/><path d="M2.300 9.300h5.200v5.200" fill="none" stroke="#1f3f86" stroke-width="1"/><path d="M14 2L9 7" stroke="#000" stroke-width="1.600"/><path d="M8.500 2.500v5h5" fill="none" stroke="#000" stroke-width="1.600"/><path d="M10 6.500h3.500L10 3z" fill="#1f3f86"/></svg>
<svg style="left:1490px;top:147px;" width="16" height="16" viewBox="0 0 16 16"><path d="M1.500 5.500h9v9h-9z" fill="#a9cef2" stroke="#000" stroke-width="1.600"/><path d="M2.500 13.500l7-7" stroke="#000" stroke-width="1.600"/><path d="M2.300 14.300L2.300 9 7.500 14.300z" fill="#1f3f86"/><path d="M9 7L14 2" stroke="#000" stroke-width="1.600"/><path d="M9 1.500h5.500V7" fill="none" stroke="#000" stroke-width="1.600"/><path d="M10.500 2.500h3.500V6z" fill="#1f3f86"/></svg>
<svg style="left:1516px;top:147px;" width="16" height="16" viewBox="0 0 16 16"><rect x="1.700" y="1.700" width="12.600" height="12.600" fill="#a9cef2" stroke="#000" stroke-width="1.800"/><path d="M2.800 13.200h10.400V2.800" fill="none" stroke="#1f3f86" stroke-width="1.200"/><path d="M4.500 4.500l7 7M11.500 4.500l-7 7" stroke="#000" stroke-width="1.900"/><path d="M5.500 4.500l7 7" stroke="#1f3f86" stroke-width=".6"/></svg>
<div style="left:344px;top:168px;width:1192px;height:27px;background:linear-gradient(#f7f7f7 0,#f3f3f3 50%,#e6e6e6 80%,#dadada 100%);"></div>
<svg style="left:352px;top:174px;" width="10" height="14" viewBox="0 0 10 14"><path d="M0.600 2.200Q0.600 0.600 2 1.300L8.200 6Q9 7 8.200 8L2 12.700Q0.600 13.400 0.600 11.800z" fill="#0a7d0a"/></svg>
<svg style="left:370px;top:173px;" width="16" height="15" viewBox="0 0 16 15"><path d="M4.500 1v7.500M0.800 4.700h7.500" stroke="#000" stroke-width="1.300"/><path d="M7 8.300h8.500M7 14.300h8.500" stroke="#0a8a0a" stroke-width="1.100"/><path d="M7 11.300h8.500" stroke="#8a1414" stroke-width="1.100"/></svg>
<svg style="left:394px;top:174px;" width="12" height="14" viewBox="0 0 12 14"><text x="0" y="6.200" font-family="Liberation Mono,monospace" font-size="7.800" fill="#a8a8a8" stroke="#a8a8a8" stroke-width=".15" textLength="11" lengthAdjust="spacingAndGlyphs">SO</text><text x="0" y="13.100" font-family="Liberation Mono,monospace" font-size="7.800" fill="#a8a8a8" stroke="#a8a8a8" stroke-width=".15" textLength="11" lengthAdjust="spacingAndGlyphs">AP</text></svg>
<svg style="left:414px;top:173px;" width="16" height="16" viewBox="0 0 16 16"><rect x="1.500" y="1.500" width="12" height="12" fill="#fff" stroke="#000" stroke-width="1.400"/><path d="M14.500 3v12H3" stroke="#999" stroke-width="1" fill="none" opacity=".6"/><path d="M4.500 9a3.200 3.200 0 0 1 5.500-3.500" fill="none" stroke="#14148c" stroke-width="1.300"/><path d="M10.800 3.300v3.200H7.600z" fill="#14148c"/><path d="M10.500 6.500a3.200 3.200 0 0 1-5.500 3.500" fill="none" stroke="#14148c" stroke-width="1.300"/><path d="M4.200 12.200V9h3.200z" fill="#14148c"/></svg>
<svg style="left:438px;top:174px;" width="13" height="13" viewBox="0 0 13 13"><rect x="1.200" y="1.200" width="9.600" height="9.600" fill="#fff" stroke="#000" stroke-width="1.400"/><path d="M12 3v9.300H3" stroke="#999" stroke-width="1" fill="none" opacity=".6"/></svg>
<svg style="left:459px;top:174px;" width="14" height="14" viewBox="0 0 14 14"><rect x="1.200" y="1.200" width="8.600" height="8.600" rx="1.500" fill="#fff" stroke="#000" stroke-width="1.400"/><rect x="3.800" y="3.800" width="8.600" height="8.600" rx="1.500" fill="#fff" stroke="#000" stroke-width="1.400"/><path d="M13.500 6v7.500H6" stroke="#999" stroke-width=".8" fill="none" opacity=".6"/></svg>
<svg style="left:482px;top:174px;" width="12" height="14" viewBox="0 0 12 14"><text x="0" y="6.200" font-family="Liberation Mono,monospace" font-size="7.800" fill="#a8a8a8" stroke="#a8a8a8" stroke-width=".15" textLength="11" lengthAdjust="spacingAndGlyphs">SO</text><text x="0" y="13.100" font-family="Liberation Mono,monospace" font-size="7.800" fill="#a8a8a8" stroke="#a8a8a8" stroke-width=".15" textLength="11" lengthAdjust="spacingAndGlyphs">AP</text></svg>
<div style="left:505px;top:176px;width:10px;height:10px;background:#8f8f8f;border-radius:2px;border:1px dashed #7a7a7a;box-sizing:border-box;"></div>
<div style="left:531px;top:171px;width:937px;height:21px;box-sizing:border-box;border:1px solid #7f7f7f;border-radius:2px;background:#fff;"></div>
<div style="left:1454px;top:172px;width:14px;height:19px;box-sizing:border-box;border-left:1px solid #8a8a8a;border-radius:0 2px 2px 0;background:linear-gradient(135deg,#fff 0,#f4f4f4 50%,#d0d0d0 100%);"></div>
<svg style="left:1457px;top:179px;" width="9" height="5" viewBox="0 0 9 5"><path d="M0 0l4.500 5L9 0z" fill="#000"/></svg>
<span class="t" style="left:535px;top:175px;letter-spacing:-0.006px;">http://localhost:8083/WebService/services/PollMeteringValues</span>
<svg style="left:1473px;top:175px;" width="15" height="14" viewBox="0 0 15 14"><rect x="0" y="0" width="14" height="4" fill="#c4c4c4"/><rect x="0.500" y="4" width="4.500" height="9" fill="#ececec"/><path d="M0 3.500h14M5.500 3.500V14M6 10l6-6" stroke="#8e8e8e" stroke-width="1.100" fill="none"/><path d="M7.500 13V9l5-4.500V13z" fill="#b0b0b0"/></svg>
<svg style="left:1496px;top:175px;" width="12" height="12" viewBox="0 0 12 12"><path d="M5.500 0v11M0 5.500h11" stroke="#2a2a2a" stroke-width="1.300"/><path d="M6.800 6.500v4.500M0 6.800h5" stroke="#aaa" stroke-width=".8"/></svg>
<svg style="left:1515px;top:173px;" width="17" height="17" viewBox="0 0 17 17"><defs><radialGradient id="hg1515" cx=".4" cy=".3" r=".8"><stop offset="0" stop-color="#9fc0ee"/><stop offset=".6" stop-color="#3f73c4"/><stop offset="1" stop-color="#1f4ea0"/></radialGradient></defs><circle cx="8.500" cy="8.500" r="8" fill="url(#hg1515)" stroke="#8fb0e0" stroke-width=".8"/><text x="8.600" y="13" text-anchor="middle" font-family="Liberation Sans,sans-serif" font-weight="bold" font-size="12.500" fill="#fff">?</text></svg>
<svg style="left:346px;top:196px;" width="20" height="72" viewBox="0 0 20 72"><path d="M19 37.500H7.500L1.500 43.500V70.500H19" fill="#dddddd" stroke="#7f7f7f" stroke-width="1"/><path d="M19 1.500H7.500L1.500 7.500V42L7.500 37.500H19" fill="#f3f3f3" stroke="none"/><path d="M19 1.500H7.500L1.500 7.500V43" fill="none" stroke="#7f7f7f" stroke-width="1"/><text transform="translate(15.300 31.500) rotate(-90)" font-family="Liberation Sans,sans-serif" font-size="12" fill="#000" textLength="23" lengthAdjust="spacingAndGlyphs">XML</text><text transform="translate(15.300 64.500) rotate(-90)" font-family="Liberation Sans,sans-serif" font-size="12" fill="#000" textLength="21.500" lengthAdjust="spacingAndGlyphs">Raw</text></svg>
<div style="left:344px;top:195px;width:625px;height:2px;background:#fafafa"></div>
<div style="left:365px;top:196px;width:605px;height:691px;box-sizing:border-box;border:1px solid #747474;border-left:none;border-top:none;background:#f4f4f4"></div>
<div style="left:367px;top:197px;width:600px;height:687px;box-sizing:border-box;border:1px solid #6e6e6e;border-right-color:#8c8c8c;border-bottom-color:#8c8c8c;background:#fff;"></div>
<div style="left:380px;top:198px;width:1px;height:670px;background:#e6e6e6"></div>
<div style="left:381px;top:200px;width:569px;height:16px;background:linear-gradient(90deg,#e6effb 0,#edf3fc 50%,#fbfcff 100%);"></div>
<div class="code" style="left:383px;top:198px;width:568px;height:670px;overflow:hidden">
<div class="ln" style="top:1px"><span style="color:#ff0000">&lt;</span><span style="color:#0000ff">soapenv:Envelope</span> <span style="color:#3f7f7f">xmlns:soapenv</span>=<span style="color:#dc009c">&quot;http://schemas.xmlsoap.org/soap/envelope/&quot;</span> <span style="color:#3f7f7f">xmlns:urn</span>=<span style="color:#dc009c">&quot;urn:no:elhub:emif:wsdl:PollMeteringValues:v1&quot;</span></div>
<div class="ln" style="top:17px">   <span style="color:#ff0000">&lt;</span><span style="color:#0000ff">soapenv:Header</span><span style="color:#ff0000">/&gt;</span></div>
<div class="ln" style="top:33px">   <span style="color:#ff0000">&lt;</span><span style="color:#0000ff">soapenv:Body</span><span style="color:#ff0000">&gt;</span></div>
<div class="ln" style="top:49px">      <span style="color:#ff0000">&lt;</span><span style="color:#0000ff">urn:AcknowledgePollRequest</span><span style="color:#ff0000">&gt;</span></div>
<div class="ln" style="top:65px">         <span style="color:#ff0000">&lt;</span><span style="color:#0000ff">urn1:Acknowledgement</span><span style="color:#ff0000">&gt;</span></div>
<div class="ln" style="top:81px">            <span style="color:#ff0000">&lt;</span><span style="color:#0000ff">urn1:Header</span><span style="color:#ff0000">&gt;</span></div>
<div class="ln" style="top:97px">               <span style="color:#ff0000">&lt;</span><span style="color:#0000ff">urn2:Identification</span><span style="color:#ff0000">&gt;</span>${=java.util.UUID.randomUUID().toString()}<span style="color:#ff0000">&lt;/</span><span style="color:#0000ff">urn2:Identification</span><span style="color:#ff0000">&gt;</span></div>
<div class="ln" style="top:113px">               <span style="color:#ff0000">&lt;</span><span style="color:#0000ff">urn2:DocumentType</span> <span style="color:#3f7f7f">listAgencyIdentifier</span>=<span style="color:#dc009c">&quot;260&quot;</span><span style="color:#ff0000">&gt;</span>21<span style="color:#ff0000">&lt;/</span><span style="color:#0000ff">urn2:DocumentType</span><span style="color:#ff0000">&gt;</span></div>
<div class="ln" style="top:129px">               <span style="color:#ff0000">&lt;</span><span style="color:#0000ff">urn2:Creation</span><span style="color:#ff0000">&gt;</span>${=javax.xml.datatype.DatatypeFactory.newInstance().newXMLGregorianCalendar()}<span style="color:#ff0000">&lt;/</span><span style="color:#0000ff">urn2:Creation</span><span style="color:#ff0000">&gt;</span></div>
<div class="ln" style="top:145px">               <span style="color:#ff0000">&lt;</span><span style="color:#0000ff">urn2:SenderEnergyParty</span><span style="color:#ff0000">&gt;</span></div>
<div class="ln" style="top:161px">                  <span style="color:#ff0000">&lt;</span><span style="color:#0000ff">urn2:Identification</span> <span style="color:#3f7f7f">schemeAgencyIdentifier</span>=<span style="color:#dc009c">&quot;9&quot;</span><span style="color:#ff0000">&gt;</span>1234567890123<span style="color:#ff0000">&lt;/</span><span style="color:#0000ff">urn2:Identification</span><span style="color:#ff0000">&gt;</span></div>
<div class="ln" style="top:177px">               <span style="color:#ff0000">&lt;/</span><span style="color:#0000ff">urn2:SenderEnergyParty</span><span style="color:#ff0000">&gt;</span></div>
<div class="ln" style="top:193px">               <span style="color:#ff0000">&lt;</span><span style="color:#0000ff">urn2:RecipientEnergyParty</span><span style="color:#ff0000">&gt;</span></div>
<div class="ln" style="top:209px">                  <span style="color:#ff0000">&lt;</span><span style="color:#0000ff">urn2:Identification</span> <span style="color:#3f7f7f">schemeAgencyIdentifier</span>=<span style="color:#dc009c">&quot;9&quot;</span><span style="color:#ff0000">&gt;</span>9876543210123<span style="color:#ff0000">&lt;/</span><span style="color:#0000ff">urn2:Identification</span><span style="color:#ff0000">&gt;</span></div>
<div class="ln" style="top:225px">               <span style="color:#ff0000">&lt;/</span><span style="color:#0000ff">urn2:RecipientEnergyParty</span><span style="color:#ff0000">&gt;</span></div>
<div class="ln" style="top:241px">            <span style="color:#ff0000">&lt;/</span><span style="color:#0000ff">urn1:Header</span><span style="color:#ff0000">&gt;</span></div>
<div class="ln" style="top:257px">            <span style="color:#ff0000">&lt;</span><span style="color:#0000ff">urn1:ProcessEnergyContext</span><span style="color:#ff0000">&gt;</span></div>
<div class="ln" style="top:273px">               <span style="color:#ff0000">&lt;</span><span style="color:#0000ff">urn2:EnergyBusinessProcess</span> <span style="color:#3f7f7f">listAgencyIdentifier</span>=<span style="color:#dc009c">&quot;89&quot;</span><span style="color:#ff0000">&gt;</span>POLL<span style="color:#ff0000">&lt;/</span><span style="color:#0000ff">urn2:EnergyBusinessProcess</span><span style="color:#ff0000">&gt;</span></div>
<div class="ln" style="top:289px">               <span style="color:#ff0000">&lt;</span><span style="color:#0000ff">urn2:EnergyBusinessProcessRole</span> <span style="color:#3f7f7f">listAgencyIdentifier</span>=<span style="color:#dc009c">&quot;6&quot;</span><span style="color:#ff0000">&gt;</span>DDQ<span style="color:#ff0000">&lt;/</span><span style="color:#0000ff">urn2:EnergyBusinessProcessRole</span><span style="color:#ff0000">&gt;</span></div>
<div class="ln" style="top:305px">               <span style="color:#ff0000">&lt;</span><span style="color:#0000ff">urn2:EnergyIndustryClassification</span><span style="color:#ff0000">&gt;</span>23<span style="color:#ff0000">&lt;/</span><span style="color:#0000ff">urn2:EnergyIndustryClassification</span><span style="color:#ff0000">&gt;</span></div>
<div class="ln" style="top:321px">            <span style="color:#ff0000">&lt;/</span><span style="color:#0000ff">urn1:ProcessEnergyContext</span><span style="color:#ff0000">&gt;</span></div>
<div class="ln" style="top:337px">            <span style="color:#ff0000">&lt;</span><span style="color:#0000ff">urn1:PayloadResponseEvent</span><span style="color:#ff0000">&gt;</span></div>
<div class="ln" style="top:353px">               <span style="color:#ff0000">&lt;</span><span style="color:#0000ff">urn2:StatusType</span> <span style="color:#3f7f7f">listAgencyIdentifier</span>=<span style="color:#dc009c">&quot;260&quot;</span><span style="color:#ff0000">&gt;</span>39<span style="color:#ff0000">&lt;/</span><span style="color:#0000ff">urn2:StatusType</span><span style="color:#ff0000">&gt;</span></div>
<div class="ln" style="top:369px">               <span style="color:#ff0000">&lt;</span><span style="color:#0000ff">urn2:OriginalBusinessDocumentReference</span><span style="color:#ff0000">&gt;</span>${=java.util.UUID.randomUUID().toString()}<span style="color:#ff0000">&lt;/</span><span style="color:#0000ff">urn2:OriginalBusinessDocumentReference</span><span style="color:#ff0000">&gt;</span></div>
<div class="ln" style="top:385px">            <span style="color:#ff0000">&lt;/</span><span style="color:#0000ff">urn1:PayloadResponseEvent</span><span style="color:#ff0000">&gt;</span></div>
<div class="ln" style="top:401px">         <span style="color:#ff0000">&lt;/</span><span style="color:#0000ff">urn1:Acknowledgement</span><span style="color:#ff0000">&gt;</span></div>
<div class="ln" style="top:417px">      <span style="color:#ff0000">&lt;/</span><span style="color:#0000ff">urn:AcknowledgePollRequest</span><span style="color:#ff0000">&gt;</span></div>
<div class="ln" style="top:433px">   <span style="color:#ff0000">&lt;/</span><span style="color:#0000ff">soapenv:Body</span><span style="color:#ff0000">&gt;</span></div>
<div class="ln" style="top:449px"><span style="color:#ff0000">&lt;/</span><span style="color:#0000ff">soapenv:Envelope</span><span style="color:#ff0000">&gt;</span></div>
</div>
<div style="left:370px;top:202px;width:9px;height:9px;box-sizing:border-box;border:1px solid #8c8c8c;background:#fff;"><i style="position:absolute;left:1px;top:3px;width:5px;height:1px;background:#8c8c8c"></i></div>
<div style="left:370px;top:234px;width:9px;height:9px;box-sizing:border-box;border:1px solid #8c8c8c;background:#fff;"><i style="position:absolute;left:1px;top:3px;width:5px;height:1px;background:#8c8c8c"></i></div>
<div style="left:370px;top:250px;width:9px;height:9px;box-sizing:border-box;border:1px solid #8c8c8c;background:#fff;"><i style="position:absolute;left:1px;top:3px;width:5px;height:1px;background:#8c8c8c"></i></div>
<div style="left:370px;top:266px;width:9px;height:9px;box-sizing:border-box;border:1px solid #8c8c8c;background:#fff;"><i style="position:absolute;left:1px;top:3px;width:5px;height:1px;background:#8c8c8c"></i></div>
<div style="left:370px;top:282px;width:9px;height:9px;box-sizing:border-box;border:1px solid #8c8c8c;background:#fff;"><i style="position:absolute;left:1px;top:3px;width:5px;height:1px;background:#8c8c8c"></i></div>
<div style="left:370px;top:346px;width:9px;height:9px;box-sizing:border-box;border:1px solid #8c8c8c;background:#fff;"><i style="position:absolute;left:1px;top:3px;width:5px;height:1px;background:#8c8c8c"></i></div>
<div style="left:370px;top:394px;width:9px;height:9px;box-sizing:border-box;border:1px solid #8c8c8c;background:#fff;"><i style="position:absolute;left:1px;top:3px;width:5px;height:1px;background:#8c8c8c"></i></div>
<div style="left:370px;top:458px;width:9px;height:9px;box-sizing:border-box;border:1px solid #8c8c8c;background:#fff;"><i style="position:absolute;left:1px;top:3px;width:5px;height:1px;background:#8c8c8c"></i></div>
<div style="left:370px;top:538px;width:9px;height:9px;box-sizing:border-box;border:1px solid #8c8c8c;background:#fff;"><i style="position:absolute;left:1px;top:3px;width:5px;height:1px;background:#8c8c8c"></i></div>
<div style="left:952px;top:198px;width:15px;height:669px;background:#f1f1f1;box-shadow:inset 1px 0 0 #e4e4e4;"></div>
<div style="left:952px;top:198px;width:15px;height:15px;box-sizing:border-box;background:linear-gradient(90deg,#fbfbfb,#e9e9e9);border-bottom:1px solid #9a9a9a;"></div>
<svg style="left:955px;top:203px;" width="9" height="5" viewBox="0 0 9 5"><path d="M0 5L4.500 0 9 5z" fill="#000"/></svg>
<div style="left:952px;top:852px;width:15px;height:15px;box-sizing:border-box;background:linear-gradient(90deg,#fbfbfb,#e9e9e9);border-top:1px solid #9a9a9a;"></div>
<svg style="left:955px;top:857px;" width="9" height="5" viewBox="0 0 9 5"><path d="M0 0l4.500 5L9 0z" fill="#000"/></svg>
<div style="left:951px;top:198px;width:1px;height:671px;background:#9a9a9a"></div>
<div style="left:368px;top:868px;width:13px;height:15px;background:#f0f0f0"></div>
<div style="left:381px;top:868px;width:586px;height:1px;background:#8a8a8a"></div>
<div style="left:381px;top:869px;width:570px;height:14px;background:#f1f1f1;box-shadow:inset 0 1px 0 #e4e4e4;"></div>
<div style="left:381px;top:869px;width:15px;height:14px;box-sizing:border-box;background:linear-gradient(#fbfbfb,#e9e9e9);border-right:1px solid #9a9a9a;"></div>
<svg style="left:385px;top:872px;" width="5" height="9" viewBox="0 0 5 9"><path d="M5 0L0 4.500 5 9z" fill="#000"/></svg>
<div style="left:936px;top:869px;width:15px;height:14px;box-sizing:border-box;background:linear-gradient(#fbfbfb,#e9e9e9);border-left:1px solid #9a9a9a;"></div>
<svg style="left:942px;top:872px;" width="5" height="9" viewBox="0 0 5 9"><path d="M0 0l5 4.500L0 9z" fill="#000"/></svg>
<div style="left:396px;top:869px;width:164px;height:14px;box-sizing:border-box;border:1px solid #3b5ea3;background:linear-gradient(#7d98cc 0,#6583bd 45%,#4d6dab 100%);box-shadow:inset 0 1px 0 #9fb4dc;"></div>
<svg style="left:463px;top:871px" width="31" height="10" shape-rendering="crispEdges"><rect width="31" height="10" fill="url(#gripb)"/></svg>
<div style="left:951px;top:869px;width:1px;height:14px;background:#9a9a9a"></div>
<div style="left:952px;top:869px;width:15px;height:15px;background:linear-gradient(135deg,#fff,#e8e8e8);"></div>
<svg style="left:952px;top:869px;" width="15" height="15" viewBox="0 0 15 15"><rect x="1.500" y="1.500" width="9" height="7" fill="#fff" stroke="#d08a4a" stroke-width="1"/><circle cx="7.500" cy="8" r="3.200" fill="#fff" stroke="#000" stroke-width="1.200"/><path d="M6 8h3M7.500 6.500v3" stroke="#d08a4a" stroke-width="1"/><path d="M10 10.500l3 3" stroke="#000" stroke-width="1.300"/></svg>
<div style="left:970px;top:196px;width:10px;height:724px;background:#f0f0f0;border-right:1px solid #6e6e6e;box-sizing:border-box;"></div>
<svg style="left:971px;top:197px;" width="8" height="24" viewBox="0 0 8 24"><path d="M6.500 1L2.500 5l4 4" fill="none" stroke="#000" stroke-width="2.200"/><path d="M1.500 11L5.500 15l-4 4" fill="none" stroke="#000" stroke-width="2.200" transform="translate(0 -0.500)"/></svg>
<svg style="left:982px;top:196px;" width="20" height="72" viewBox="0 0 20 72"><path d="M19 37.500H7.500L1.500 43.500V70.500H19" fill="#dddddd" stroke="#7f7f7f" stroke-width="1"/><path d="M19 1.500H7.500L1.500 7.500V42L7.500 37.500H19" fill="#f3f3f3" stroke="none"/><path d="M19 1.500H7.500L1.500 7.500V43" fill="none" stroke="#7f7f7f" stroke-width="1"/><text transform="translate(15.300 31.500) rotate(-90)" font-family="Liberation Sans,sans-serif" font-size="12" fill="#000" textLength="23" lengthAdjust="spacingAndGlyphs">XML</text><text transform="translate(15.300 64.500) rotate(-90)" font-family="Liberation Sans,sans-serif" font-size="12" fill="#000" textLength="21.500" lengthAdjust="spacingAndGlyphs">Raw</text></svg>
<div style="left:980px;top:195px;width:556px;height:2px;background:#fafafa"></div>
<div style="left:1002px;top:196px;width:534px;height:691px;box-sizing:border-box;border:1px solid #747474;border-left:none;border-top:none;background:#f4f4f4"></div>
<div style="left:1003px;top:197px;width:531px;height:687px;box-sizing:border-box;border:1px solid #6e6e6e;border-right-color:#8c8c8c;border-bottom-color:#8c8c8c;background:#fff;"></div>
<div style="left:1016px;top:198px;width:1px;height:670px;background:#e6e6e6"></div>
<div style="left:1019px;top:200px;width:498px;height:16px;background:linear-gradient(90deg,#e6effb 0,#edf3fc 50%,#fdfeff 100%);"></div>
<div style="left:1518px;top:198px;width:15px;height:669px;background:#f1f1f1;box-shadow:inset 1px 0 0 #e4e4e4;"></div>
<div style="left:1518px;top:198px;width:15px;height:15px;box-sizing:border-box;background:linear-gradient(90deg,#fbfbfb,#e9e9e9);border-bottom:1px solid #9a9a9a;"></div>
<svg style="left:1521px;top:203px;" width="9" height="5" viewBox="0 0 9 5"><path d="M0 5L4.500 0 9 5z" fill="#000"/></svg>
<div style="left:1518px;top:852px;width:15px;height:15px;box-sizing:border-box;background:linear-gradient(90deg,#fbfbfb,#e9e9e9);border-top:1px solid #9a9a9a;"></div>
<svg style="left:1521px;top:857px;" width="9" height="5" viewBox="0 0 9 5"><path d="M0 0l4.500 5L9 0z" fill="#000"/></svg>
<div style="left:1517px;top:198px;width:1px;height:671px;background:#9a9a9a"></div>
<div style="left:1004px;top:868px;width:13px;height:15px;background:#f0f0f0"></div>
<div style="left:1017px;top:868px;width:516px;height:1px;background:#8a8a8a"></div>
<div style="left:1017px;top:869px;width:500px;height:14px;background:#f1f1f1;box-shadow:inset 0 1px 0 #e4e4e4;"></div>
<div style="left:1017px;top:869px;width:15px;height:14px;box-sizing:border-box;background:linear-gradient(#fbfbfb,#e9e9e9);border-right:1px solid #9a9a9a;"></div>
<svg style="left:1021px;top:872px;" width="5" height="9" viewBox="0 0 5 9"><path d="M5 0L0 4.500 5 9z" fill="#000"/></svg>
<div style="left:1502px;top:869px;width:15px;height:14px;box-sizing:border-box;background:linear-gradient(#fbfbfb,#e9e9e9);border-left:1px solid #9a9a9a;"></div>
<svg style="left:1508px;top:872px;" width="5" height="9" viewBox="0 0 5 9"><path d="M0 0l5 4.500L0 9z" fill="#000"/></svg>
<div style="left:1517px;top:869px;width:1px;height:14px;background:#9a9a9a"></div>
<div style="left:1518px;top:869px;width:15px;height:15px;background:linear-gradient(135deg,#fff,#e8e8e8);"></div>
<svg style="left:1518px;top:869px;" width="15" height="15" viewBox="0 0 15 15"><rect x="1.500" y="1.500" width="9" height="7" fill="#fff" stroke="#d08a4a" stroke-width="1"/><circle cx="7.500" cy="8" r="3.200" fill="#fff" stroke="#000" stroke-width="1.200"/><path d="M6 8h3M7.500 6.500v3" stroke="#d08a4a" stroke-width="1"/><path d="M10 10.500l3 3" stroke="#000" stroke-width="1.300"/></svg>
<div style="left:344px;top:891px;width:626px;height:1px;background:#8a8a8a"></div>
<div style="left:344px;top:892px;width:626px;height:28px;background:linear-gradient(#fff 0,#fff 45%,#f2f2f2 75%,#e4e4e4 100%);"></div>
<span class="t" style="left:360px;top:899px;letter-spacing:0.329px;">Auth</span>
<span class="t" style="left:399px;top:899px;letter-spacing:-0.305px;">Headers (0)</span>
<span class="t" style="left:472px;top:899px;letter-spacing:0.020px;">Attachments (0)</span>
<span class="t" style="left:570px;top:899px;letter-spacing:-0.333px;">WS-A</span>
<span class="t" style="left:613px;top:899px;letter-spacing:-0.398px;">WS-RM</span>
<span class="t" style="left:666px;top:899px;color:#b4b4b4;letter-spacing:-0.517px;">JMS Headers</span>
<span class="t" style="left:746px;top:899px;color:#b4b4b4;letter-spacing:-0.335px;">JMS Properties (0)</span>
<div style="left:980px;top:891px;width:556px;height:1px;background:#8a8a8a"></div>
<div style="left:980px;top:892px;width:556px;height:28px;background:linear-gradient(#fff 0,#fff 45%,#f2f2f2 75%,#e4e4e4 100%);"></div>
<span class="t" style="left:996px;top:899px;letter-spacing:-0.305px;">Headers (0)</span>
<span class="t" style="left:1069px;top:899px;letter-spacing:0.020px;">Attachments (0)</span>
<span class="t" style="left:1167px;top:899px;letter-spacing:-0.448px;">SSL Info</span>
<span class="t" style="left:1222px;top:899px;color:#b4b4b4;letter-spacing:-0.762px;">WSS (0)</span>
<span class="t" style="left:1275px;top:899px;color:#b4b4b4;letter-spacing:-0.572px;">JMS (0)</span>
<div style="left:1416px;top:921px;width:1px;height:17px;background:#b8b8b8"></div>
<div style="left:1417px;top:921px;width:1px;height:17px;background:#fff"></div>
<div style="left:1476px;top:921px;width:1px;height:17px;background:#b8b8b8"></div>
<div style="left:1477px;top:921px;width:1px;height:17px;background:#fff"></div>
<div style="left:1420px;top:923px;width:53px;height:12px;box-sizing:border-box;border:1px solid #b4b4b4;background:#fff"></div>
<span class="t" style="left:1481px;top:923px;letter-spacing:-0.670px;">1 : 1</span>
<div style="left:357px;top:207px;width:285px;height:18px;box-sizing:border-box;border:1px solid #2f4f8f;background:#a9cef2;box-shadow:2px 2px 2px rgba(0,0,0,.45);"></div>
<span class="t" style="left:362px;top:210px;letter-spacing:-0.058px;">Submit request to specified endpoint URL (Alt-Enter)</span>
</body></html>
